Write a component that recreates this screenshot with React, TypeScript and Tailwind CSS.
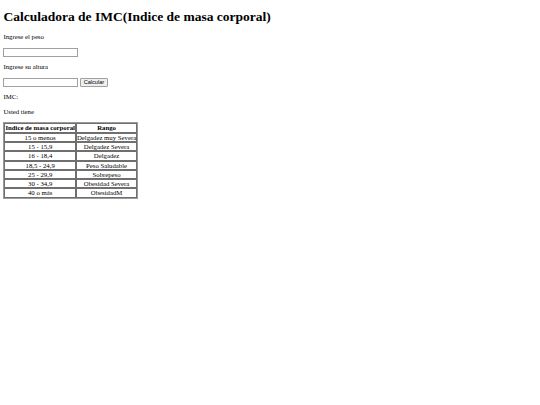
import React from "react";

const rows: [string, string][] = [
  ["15 o menos", "Delgadez muy Severa"],
  ["15 - 15,9", "Delgadez Severa"],
  ["16 - 18,4", "Delgadez"],
  ["18,5 - 24,9", "Peso Saludable"],
  ["25 - 29,9", "Sobrepeso"],
  ["30 - 34,9", "Obesidad Severa"],
  ["40 o más", "ObesidadM"],
];

export default function App() {
  return (
    <div className="min-h-[405px] bg-white px-[3.4px] pt-[8.5px] font-['Liberation_Serif',serif] text-[6.75px] leading-[7.8px] text-black">
      <h1 className="text-[13.5px] font-bold leading-[15.6px]">Calculadora de IMC(Indice de masa corporal)</h1>
      <p className="mt-[9px]">Ingrese el peso</p>
      <div className="mt-[6.75px] flex">
        <input className="h-[8.9px] w-[75px] border-[0.85px] border-[#a0a0a0] bg-white" />
      </div>
      <p className="mt-[6.75px]">Ingrese su altura</p>
      <div className="mt-[6.75px] flex items-center gap-[1.5px]">
        <input className="h-[8.9px] w-[75px] border-[0.85px] border-[#a0a0a0] bg-white" />
        <button className="flex h-[8.9px] w-[28px] items-center justify-center rounded-[1px] border-[0.85px] border-[#a0a0a0] bg-[#efefef] font-['Liberation_Sans',sans-serif] text-[5.6px] leading-[6px] text-black">
          Calcular
        </button>
      </div>
      <p className="mt-[6.75px]">IMC:</p>
      <p className="mt-[6.75px]">Usted tiene</p>
      <table className="mt-[6.5px] border-separate border-spacing-[0.85px] border-[0.85px] border-[#9a9a9a]">
        <thead>
          <tr>
            <th className="border-[0.85px] border-[#6f6f6f] p-0 font-bold leading-[7.3px]">Indice de masa corporal</th>
            <th className="border-[0.85px] border-[#6f6f6f] p-0 font-bold leading-[7.3px]">Rango</th>
          </tr>
        </thead>
        <tbody>
          {rows.map(([a, b]) => (
            <tr key={a}>
              <td className="border-[0.85px] border-[#6f6f6f] p-0 text-center leading-[7.3px]">{a}</td>
              <td className="border-[0.85px] border-[#6f6f6f] p-0 text-center leading-[7.3px]">{b}</td>
            </tr>
          ))}
        </tbody>
      </table>
    </div>
  );
}
